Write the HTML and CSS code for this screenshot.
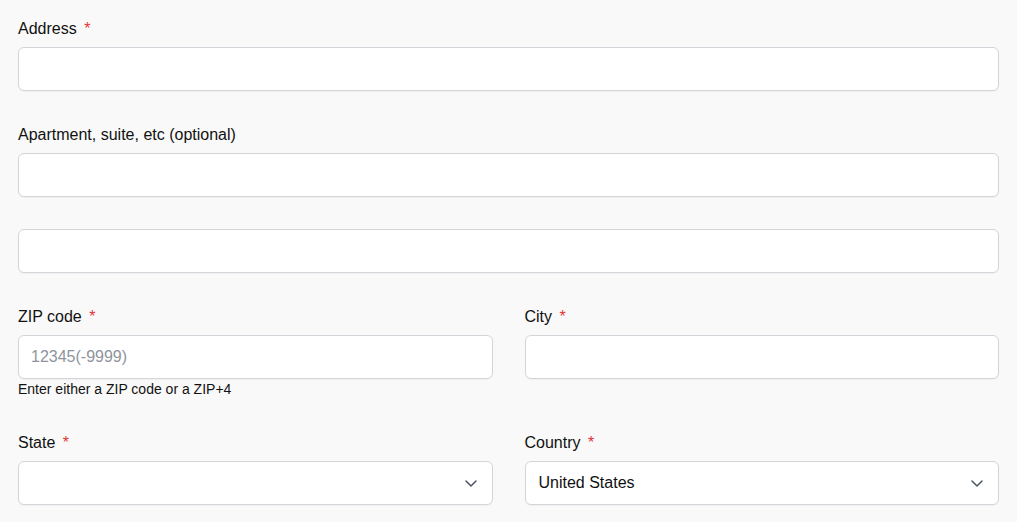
FILE: index.html
```html
<!DOCTYPE html>
<html lang="en">
<head>
<meta charset="utf-8">
<title>Address form</title>
<link rel="stylesheet" href="styles.css">
</head>
<body>
<form class="form">
  <div class="field">
    <label class="label">Address <span class="req">*</span></label>
    <input class="input" type="text">
  </div>
  <div class="field">
    <label class="label">Apartment, suite, etc (optional)</label>
    <input class="input" type="text">
  </div>
  <div class="field">
    <input class="input" type="text">
  </div>
  <div class="row">
    <div class="field">
      <label class="label">ZIP code <span class="req">*</span></label>
      <input class="input" type="text" placeholder="12345(-9999)">
      <div class="help">Enter either a ZIP code or a ZIP+4</div>
    </div>
    <div class="field">
      <label class="label">City <span class="req">*</span></label>
      <input class="input" type="text">
    </div>
  </div>
  <div class="row">
    <div class="field">
      <label class="label">State <span class="req">*</span></label>
      <div class="select">
        <span class="select-value"></span>
        <svg class="chev" width="12" height="7" viewBox="0 0 12 7"><path d="M1 1l5 5 5-5" fill="none" stroke="#4b5563" stroke-width="1.5" stroke-linecap="round" stroke-linejoin="round"/></svg>
      </div>
    </div>
    <div class="field">
      <label class="label">Country <span class="req">*</span></label>
      <div class="select">
        <span class="select-value">United States</span>
        <svg class="chev" width="12" height="7" viewBox="0 0 12 7"><path d="M1 1l5 5 5-5" fill="none" stroke="#4b5563" stroke-width="1.5" stroke-linecap="round" stroke-linejoin="round"/></svg>
      </div>
    </div>
  </div>
</form>
</body>
</html>
```
FILE: styles.css
```css
html, body {
  margin: 0;
  background: #f9f9f9;
}
body {
  padding: 17px 18px;
  font-family: "Liberation Sans", Arial, sans-serif;
  color: #111111;
}
.form {
  display: flex;
  flex-direction: column;
  gap: 32px;
}
.row {
  display: grid;
  grid-template-columns: 1fr 1fr;
  gap: 32px;
}
.field {
  display: flex;
  flex-direction: column;
  min-width: 0;
}
.label {
  font-size: 16px;
  line-height: 24px;
  margin-bottom: 6px;
}
.req {
  color: #e5333a;
  margin-left: 3px;
}
.input, .select {
  box-sizing: border-box;
  height: 44px;
  width: 100%;
  border: 1px solid #d3d5da;
  border-radius: 6px;
  background: #ffffff;
  padding: 0 12px;
  font-family: "Liberation Sans", Arial, sans-serif;
  font-size: 16px;
  color: #111111;
  outline: none;
  box-shadow: 0 1px 1px rgba(0,0,0,0.04);
}
.input::placeholder {
  color: #8f949c;
}
.help {
  font-size: 14px;
  line-height: 20px;
  color: #111111;
}
.select {
  display: flex;
  align-items: center;
  justify-content: space-between;
  padding: 0 15px 0 13px;
}
.chev {
  display: block;
}
```
